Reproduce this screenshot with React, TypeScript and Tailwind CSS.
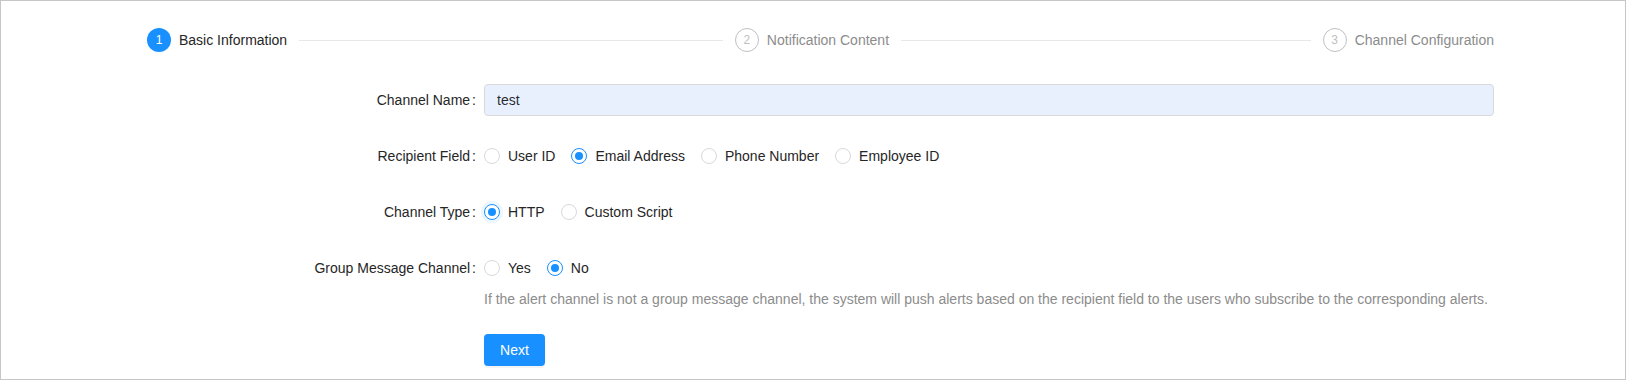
import type { ReactNode } from 'react';

const steps = ['Basic Information', 'Notification Content', 'Channel Configuration'];

function Steps({ current }: { current: number }) {
  return (
    <div className="flex items-center">
      {steps.map((title, i) => {
        const last = i === steps.length - 1;
        const active = i === current;
        return (
          <div key={title} className={`flex items-center ${last ? 'flex-none' : 'flex-1'} ${i > 0 ? 'pl-3' : ''}`}>
            <span
              className={
                active
                  ? 'flex h-6 w-6 items-center justify-center rounded-full bg-[#1890ff] text-[12px] text-white'
                  : 'flex h-6 w-6 items-center justify-center rounded-full border border-[#bfbfbf] text-[12px] text-[#bfbfbf]'
              }
            >
              {i + 1}
            </span>
            <span className={`ml-2 whitespace-nowrap text-[14px] ${active ? 'text-[#262626]' : 'text-[#8c8c8c]'}`}>{title}</span>
            {!last && <span className="ml-3 h-px flex-1 bg-[#e8e8e8]" />}
          </div>
        );
      })}
    </div>
  );
}

function Radio({ label, checked, focus }: { label: string; checked?: boolean; focus?: boolean }) {
  return (
    <label className="mr-2 inline-flex items-center">
      <span
        className={`flex h-4 w-4 items-center justify-center rounded-full border bg-white ${
          checked ? 'border-[#1890ff]' : 'border-[#d9d9d9]'
        } ${focus ? 'shadow-[0_0_0_3px_rgba(24,144,255,0.08)]' : ''}`}
      >
        {checked && <span className="h-2 w-2 rounded-full bg-[#1890ff]" />}
      </span>
      <span className="px-2 text-[14px] text-[#262626]">{label}</span>
    </label>
  );
}

function FormRow({ label, children, extra }: { label: string; children: ReactNode; extra?: string }) {
  return (
    <div className="mb-6 flex">
      <div className="flex h-8 w-[337px] flex-none items-center justify-end text-[14px] text-[#262626]">
        {label}
        <span className="ml-[2px] mr-2">:</span>
      </div>
      <div className="flex-1">
        <div className="flex h-8 items-center">{children}</div>
        {extra && <div className="mt-1 text-[14px] leading-[22px] text-[#8c8c8c]">{extra}</div>}
      </div>
    </div>
  );
}

export default function App() {
  return (
    <div className="box-border h-[380px] w-[1626px] border border-[#c6c6c6] bg-white pt-[27px] font-['Liberation_Sans',Arial,sans-serif]">
      <div className="ml-[146px] w-[1347px]">
        <Steps current={0} />

        <div className="mt-8">
          <FormRow label="Channel Name">
            <input
              defaultValue="test"
              className="h-8 w-full rounded border border-[#d9d9d9] bg-[#e8f0fe] px-3 text-[14px] text-[#000000d9] outline-none"
            />
          </FormRow>

          <FormRow label="Recipient Field">
            <Radio label="User ID" />
            <Radio label="Email Address" checked />
            <Radio label="Phone Number" />
            <Radio label="Employee ID" />
          </FormRow>

          <FormRow label="Channel Type">
            <Radio label="HTTP" checked focus />
            <Radio label="Custom Script" />
          </FormRow>

          <FormRow
            label="Group Message Channel"
            extra="If the alert channel is not a group message channel, the system will push alerts based on the recipient field to the users who subscribe to the corresponding alerts."
          >
            <Radio label="Yes" />
            <Radio label="No" checked />
          </FormRow>

          <div className="flex">
            <div className="w-[337px] flex-none" />
            <button className="h-8 w-[61px] rounded bg-[#1890ff] text-[14px] text-white shadow-[0_2px_0_rgba(0,0,0,0.045)]">
              Next
            </button>
          </div>
        </div>
      </div>
    </div>
  );
}
